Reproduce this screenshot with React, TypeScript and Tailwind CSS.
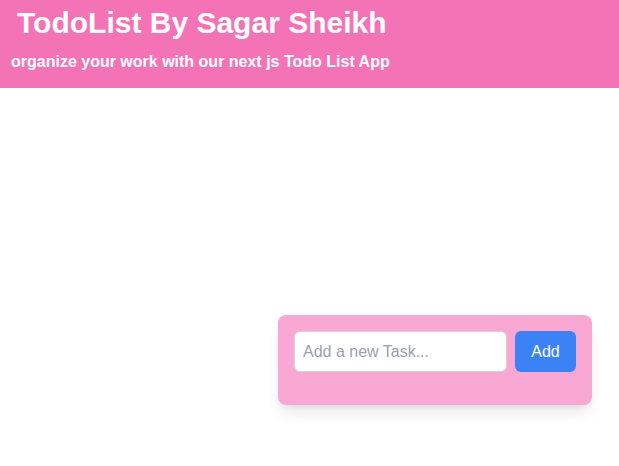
export default function App() {
  return (
    <div className="min-h-screen bg-white font-['Liberation_Sans',Arial,sans-serif]">
      {/* header */}
      <header className="h-[88px] bg-[#f472b6] px-[11px] pt-[5px] text-white">
        <h1 className="pl-[6px] text-[30px] font-bold leading-[36px]">TodoList By Sagar Sheikh</h1>
        <p className="mt-[9px] text-base font-bold leading-6">
          organize your work with our next js Todo List App
        </p>
      </header>

      <main className="pl-[278px] pt-[227px]">
        <div className="w-[314px] rounded-lg bg-[#f9a8d4] p-4 pb-[33px] shadow-lg">
          <form className="flex gap-2" onSubmit={(e) => e.preventDefault()}>
            <input
              type="text"
              placeholder="Add a new Task..."
              className="h-[41px] w-[213px] rounded-md border border-gray-300 bg-white px-2 text-base text-gray-800 outline-none placeholder:text-gray-400"
            />
            <button
              type="submit"
              className="h-[41px] w-[61px] rounded-md bg-[#3b82f6] text-base text-white"
            >
              Add
            </button>
          </form>
        </div>
      </main>
    </div>
  );
}
